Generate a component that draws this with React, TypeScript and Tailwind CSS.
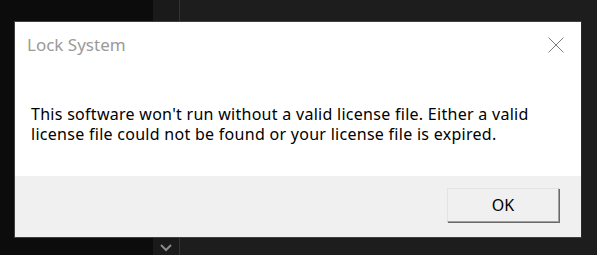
export default function App() {
  return (
    <div className="relative w-[597px] h-[255px] overflow-hidden bg-[#1d1d1d] font-['Noto_Sans',sans-serif]">
      {/* desktop behind the dialog */}
      <div className="flex h-full">
        <div className="w-[153px] h-full bg-[#0c0c0c]" />
        <div className="w-[26px] h-full bg-[#1a1a1a] flex flex-col justify-end items-center pb-[2px]">
          <svg width="12" height="8" viewBox="0 0 12 8" className="mb-[1px]">
            <path d="M1 1 L6 6 L11 1" fill="none" stroke="#8a8a8a" strokeWidth="2" />
          </svg>
        </div>
        <div className="w-px h-full bg-[#333333]" />
        <div className="flex-1 h-full bg-[#1d1d1d]" />
      </div>

      {/* dialog window */}
      <div className="absolute left-[14px] top-[21px] w-[568px] h-[217px] border border-[#3f3f3f] border-r-[#2a2a2a] flex flex-col">
        <div className="h-[154px] bg-white flex flex-col">
          <div className="flex items-start justify-between pl-[12px] pr-[17px] pt-[12px]">
            <span className="text-[17px] leading-[22px] text-[#9a9a9a]">Lock System</span>
            <svg width="16" height="16" viewBox="0 0 16 16" className="mt-[3px]">
              <path d="M0.5 0.5 L15.5 15.5 M15.5 0.5 L0.5 15.5" stroke="#7a7a7a" strokeWidth="1" fill="none" />
            </svg>
          </div>
          <p className="pl-[16px] pt-[48px] text-[16px] leading-[20px] tracking-[0.28px] text-black whitespace-nowrap">
            This software won't run without a valid license file. Either a valid
            <br />
            license file could not be found or your license file is expired.
          </p>
        </div>
        <div className="flex-1 bg-[#f0f0f0] flex items-start justify-end pr-[22px] pt-[12px]">
          <button
            type="button"
            className="w-[112px] h-[34px] bg-[#f0f0f0] border border-t-[#e3e3e3] border-l-[#e3e3e3] border-r-[#a0a0a0] border-b-[#a0a0a0] shadow-[1px_1px_0_#696969] text-[16px] text-black"
          >
            OK
          </button>
        </div>
      </div>
    </div>
  )
}
